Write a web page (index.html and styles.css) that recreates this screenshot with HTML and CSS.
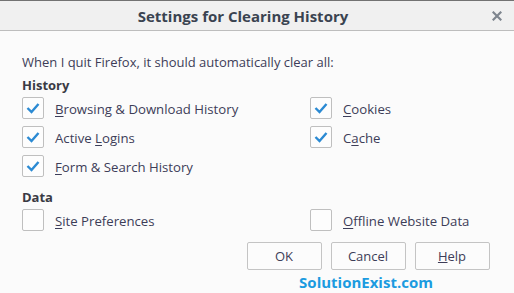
FILE: index.html
```html
<!DOCTYPE html>
<html>
<head>
<meta charset="utf-8">
<link rel="stylesheet" href="styles.css">
</head>
<body>
<div class="dialog">
  <div class="titlebar">
    <span class="title">Settings for Clearing History</span>
    <svg class="close" width="10" height="10" viewBox="0 0 10 10"><path d="M1.5 1.5 L8.5 8.5 M8.5 1.5 L1.5 8.5" stroke="#7e858e" stroke-width="2.2" stroke-linecap="square"/></svg>
  </div>
  <div class="content">
    <div class="intro">When I quit Firefox, it should automatically clear all:</div>
    <div class="heading">History</div>
    <div class="grid">
      <div class="item"><span class="box checked"><svg width="22" height="22" viewBox="0 0 22 22"><polyline points="5.5,11 9.5,15 16.5,7" fill="none" stroke="#2b8ad3" stroke-width="2.4"/></svg></span><span class="label"><u>B</u>rowsing &amp; Download History</span></div>
      <div class="item"><span class="box checked"><svg width="22" height="22" viewBox="0 0 22 22"><polyline points="5.5,11 9.5,15 16.5,7" fill="none" stroke="#2b8ad3" stroke-width="2.4"/></svg></span><span class="label"><u>C</u>ookies</span></div>
      <div class="item"><span class="box checked"><svg width="22" height="22" viewBox="0 0 22 22"><polyline points="5.5,11 9.5,15 16.5,7" fill="none" stroke="#2b8ad3" stroke-width="2.4"/></svg></span><span class="label">Active <u>L</u>ogins</span></div>
      <div class="item"><span class="box checked"><svg width="22" height="22" viewBox="0 0 22 22"><polyline points="5.5,11 9.5,15 16.5,7" fill="none" stroke="#2b8ad3" stroke-width="2.4"/></svg></span><span class="label">C<u>a</u>che</span></div>
      <div class="item"><span class="box checked"><svg width="22" height="22" viewBox="0 0 22 22"><polyline points="5.5,11 9.5,15 16.5,7" fill="none" stroke="#2b8ad3" stroke-width="2.4"/></svg></span><span class="label"><u>F</u>orm &amp; Search History</span></div>
      <div class="item"></div>
    </div>
    <div class="heading data">Data</div>
    <div class="grid">
      <div class="item"><span class="box"></span><span class="label"><u>S</u>ite Preferences</span></div>
      <div class="item"><span class="box"></span><span class="label"><u>O</u>ffline Website Data</span></div>
    </div>
    <div class="footer">
      <div class="buttons">
        <button class="btn">OK</button>
        <button class="btn">Cancel</button>
        <button class="btn"><u>H</u>elp</button>
      </div>
      <div class="watermark">SolutionExist.com</div>
    </div>
  </div>
</div>
</body>
</html>
```
FILE: styles.css
```css
html, body {
  margin: 0;
  padding: 0;
  background: #fbfbfb;
}
body {
  width: 514px;
  height: 293px;
  overflow: hidden;
  font-family: "Open Sans", "Noto Sans", sans-serif;
  color: #3d3d58;
}
.dialog {
  display: flex;
  flex-direction: column;
}
.titlebar {
  height: 29px;
  border-top: 1px solid #727272;
  border-bottom: 1px solid #bdbdbd;
  background: #f0f0f0;
  display: flex;
  align-items: center;
  justify-content: center;
  position: relative;
}
.title {
  font-weight: 700;
  font-size: 15px;
  color: #3a4350;
  margin-left: -28px;
}
.close {
  position: absolute;
  right: 12px;
  top: 10px;
}
.content {
  padding-left: 22px;
  display: flex;
  flex-direction: column;
}
.intro {
  margin-top: 21px;
  font-size: 13px;
  line-height: 20px;
}
.heading {
  margin-top: 4px;
  font-size: 13px;
  font-weight: 700;
  line-height: 18px;
  color: #3a3a44;
}
.heading.data {
  margin-top: 7px;
}
.grid {
  display: grid;
  grid-template-columns: 288px 1fr;
  grid-auto-rows: 29px;
}
.item {
  display: flex;
  align-items: center;
}
.box {
  width: 22px;
  height: 22px;
  box-sizing: border-box;
  border: 1px solid #bfbfbf;
  border-radius: 2px;
  background: #fdfdfd;
  display: flex;
  align-items: center;
  justify-content: center;
  margin-top: -1px;
}
.box svg {
  display: block;
  flex: none;
}
.label {
  margin-left: 11px;
  font-size: 13.2px;
  color: #3d3d58;
}
.label u {
  text-decoration-thickness: 1px;
  text-underline-offset: 2px;
}
.footer {
  align-self: flex-end;
  margin-right: 25px;
  margin-top: 7px;
  width: 242px;
  display: flex;
  flex-direction: column;
  align-items: center;
}
.buttons {
  display: flex;
  gap: 9px;
}
.btn {
  width: 75px;
  height: 28px;
  box-sizing: border-box;
  border: 1px solid #c4c4c4;
  border-radius: 2px;
  background: #fcfcfc;
  font-family: "Open Sans", "Noto Sans", sans-serif;
  font-size: 13px;
  color: #3d3d58;
  padding: 0;
}
.watermark {
  margin-top: 3px;
  font-size: 15px;
  font-weight: 700;
  line-height: 18px;
  color: #1b9be0;
  margin-left: -4px;
}
```
